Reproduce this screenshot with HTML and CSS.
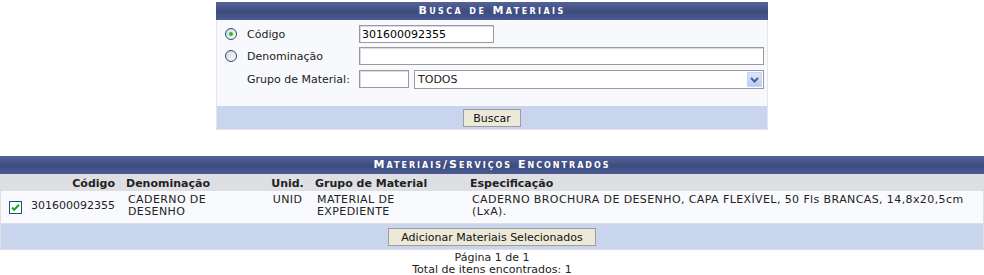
FILE: index.html
```html
<!DOCTYPE html>
<html lang="pt-BR">
<head>
    <meta charset="UTF-8">
    <title>Busca de Materiais</title>
    <link rel="stylesheet" href="styles.css">
</head>
<body>
    <table class="formulario">
        <caption>Busca de Materiais</caption>
        <tbody>
            <tr class="primeira">
                <td class="opcao">
                    <svg class="radio" width="12" height="12" viewBox="0 0 12 12">
                        <defs>
                            <linearGradient id="rg" x1="0" y1="0" x2="1" y2="1">
                                <stop offset="0" stop-color="#d4d4ce"/>
                                <stop offset="1" stop-color="#ffffff"/>
                            </linearGradient>
                        </defs>
                        <circle cx="6" cy="6" r="5.5" fill="url(#rg)" stroke="#1c5180"/>
                        <circle cx="6" cy="6" r="2" fill="#2fb52f"/>
                    </svg>
                </td>
                <td class="rotulo">Código</td>
                <td><input type="text" class="campo codigo" value="301600092355"></td>
            </tr>
            <tr>
                <td class="opcao">
                    <svg class="radio" width="12" height="12" viewBox="0 0 12 12">
                        <circle cx="6" cy="6" r="5.5" fill="url(#rg)" stroke="#1c5180"/>
                    </svg>
                </td>
                <td class="rotulo">Denominação</td>
                <td><input type="text" class="campo denominacao" value=""></td>
            </tr>
            <tr class="ultima">
                <td></td>
                <td class="rotulo">Grupo de Material:</td>
                <td class="grupo">
                    <input type="text" class="campo grupo-cod" value="">
                    <div class="combo">
                        <span>TODOS</span>
                        <span class="seta">
                            <svg width="9" height="6" viewBox="0 0 9 6">
                                <path d="M1 1 L4.5 4.5 L8 1" fill="none" stroke="#4d6185" stroke-width="2"/>
                            </svg>
                        </span>
                    </div>
                </td>
            </tr>
        </tbody>
        <tfoot>
            <tr>
                <td colspan="3"><button class="btn-buscar">Buscar</button></td>
            </tr>
        </tfoot>
    </table>

    <table class="listagem">
        <caption>Materiais/Serviços Encontrados</caption>
        <thead>
            <tr>
                <th class="col-check"></th>
                <th class="col-codigo">Código</th>
                <th class="col-denom">Denominação</th>
                <th class="col-unid">Unid.</th>
                <th class="col-grupo">Grupo de Material</th>
                <th class="col-espec">Especificação</th>
            </tr>
        </thead>
        <tbody>
            <tr>
                <td class="col-check">
                    <svg width="13" height="13" viewBox="0 0 13 13">
                        <rect x="0.5" y="0.5" width="12" height="12" fill="#fff" stroke="#1c5180"/>
                        <path d="M3 6.5 L5.2 8.8 L10 3.8" fill="none" stroke="#21a121" stroke-width="2"/>
                    </svg>
                </td>
                <td class="col-codigo">301600092355</td>
                <td class="col-denom">CADERNO DE DESENHO</td>
                <td class="col-unid">UNID</td>
                <td class="col-grupo">MATERIAL DE EXPEDIENTE</td>
                <td class="col-espec">CADERNO BROCHURA DE DESENHO, CAPA FLEXÍVEL, 50 Fls BRANCAS, 14,8x20,5cm (LxA).</td>
            </tr>
        </tbody>
        <tfoot>
            <tr>
                <td colspan="6"><button class="btn-adicionar">Adicionar Materiais Selecionados</button></td>
            </tr>
        </tfoot>
    </table>

    <div class="paginacao">
        Página 1 de 1<br>
        Total de itens encontrados: 1
    </div>
</body>
</html>
```

FILE: styles.css
```css
body {
    margin: 0;
    padding-top: 2px;
    font-family: "DejaVu Sans", Verdana, sans-serif;
    font-size: 11px;
    color: #222;
    background: #fff;
}
table {
    border-collapse: collapse;
}
caption {
    height: 18px;
    line-height: 18px;
    background: linear-gradient(#55639a, #3d4b7e 55%, #4b5b92);
    color: #fff;
    font-weight: bold;
    font-variant: small-caps;
    letter-spacing: 2px;
    text-align: center;
}
button {
    font-family: "DejaVu Sans", Verdana, sans-serif;
    font-size: 11px;
    background: #ece9d8;
    border: 1px solid #9d9d9d;
    color: #111;
    height: 18px;
    padding: 0;
    cursor: pointer;
}
.btn-buscar {
    width: 58px;
}
.btn-adicionar {
    width: 208px;
}
tfoot td {
    background: #c8d5ec;
    text-align: center;
}

/* busca */
.formulario {
    width: 552px;
    margin: 0 auto;
    background: #f8f9fc;
    border: 1px solid #e3e5ea;
    border-top: none;
}
.formulario caption {
    letter-spacing: 2.4px;
}
.formulario td {
    padding: 2px 2px;
}
.formulario .primeira td {
    padding-top: 5px;
}
.formulario .ultima td {
    padding-top: 3px;
    padding-bottom: 17px;
}
.opcao {
    width: 16px;
    padding-left: 8px !important;
    text-align: center;
}
.radio {
    display: block;
}
.rotulo {
    width: 108px;
    padding-left: 4px !important;
}
.campo {
    box-sizing: border-box;
    height: 18px;
    border: 1px solid #9a9a9a;
    box-shadow: inset 1px 1px 0 #dcdcdc;
    background: #fff;
    font-family: "DejaVu Sans", Verdana, sans-serif;
    font-size: 11px;
    padding: 1px 2px;
    margin: 0;
}
.codigo {
    width: 135px;
}
.denominacao {
    width: 405px;
}
.grupo {
    display: flex;
    gap: 5px;
}
.grupo-cod {
    width: 50px;
}
.combo {
    box-sizing: border-box;
    width: 350px;
    height: 19px;
    border: 1px solid #9a9a9a;
    background: #fff;
    display: flex;
    align-items: center;
    justify-content: space-between;
    padding-left: 3px;
}
.seta {
    width: 15px;
    height: 15px;
    margin-right: 1px;
    box-sizing: border-box;
    border: 1px solid #c4d3f8;
    background: linear-gradient(#dde7fd, #b8cbf5);
    display: flex;
    align-items: center;
    justify-content: center;
}
.formulario tfoot td {
    padding: 3px 0 2px;
}

/* resultado */
.listagem {
    width: 100%;
    table-layout: fixed;
    margin-top: 26px;
    border: 1px solid #dedfe3;
    border-top: none;
}
.listagem thead th {
    background: #dedfe3;
    color: #222;
    font-weight: bold;
    padding: 2px 3px 1px;
    height: 14px;
    text-align: left;
}
.listagem tbody td {
    background: #f9fafd;
    vertical-align: top;
    padding: 3px 3px 5px;
    line-height: 12px;
    letter-spacing: 0.4px;
    border-bottom: 1px solid #dedfe3;
}
.listagem tbody td.col-check {
    vertical-align: middle;
    padding: 0 0 0 8px;
}
.listagem tbody td.col-codigo {
    vertical-align: middle;
    letter-spacing: 0;
}
.listagem svg {
    display: block;
}
.col-check {
    width: 16px;
}
.listagem .col-codigo {
    width: 89px;
    text-align: right;
}
.listagem .col-denom {
    width: 135px;
    padding-left: 8px;
    padding-right: 3px;
}
.listagem td.col-denom {
    padding-left: 10px;
}
.listagem .col-unid {
    width: 41px;
    text-align: center;
}
.listagem .col-grupo {
    width: 146px;
    padding-left: 4px;
    padding-right: 5px;
}
.listagem td.col-grupo {
    padding-left: 6px;
}
.listagem .col-espec {
    padding-left: 4px;
    padding-right: 8px;
}
.listagem td.col-espec {
    padding-left: 6px;
}
.listagem tfoot td {
    padding: 4px 0 3px;
}
.paginacao {
    text-align: center;
    line-height: 12px;
    margin-top: 2px;
}
```
